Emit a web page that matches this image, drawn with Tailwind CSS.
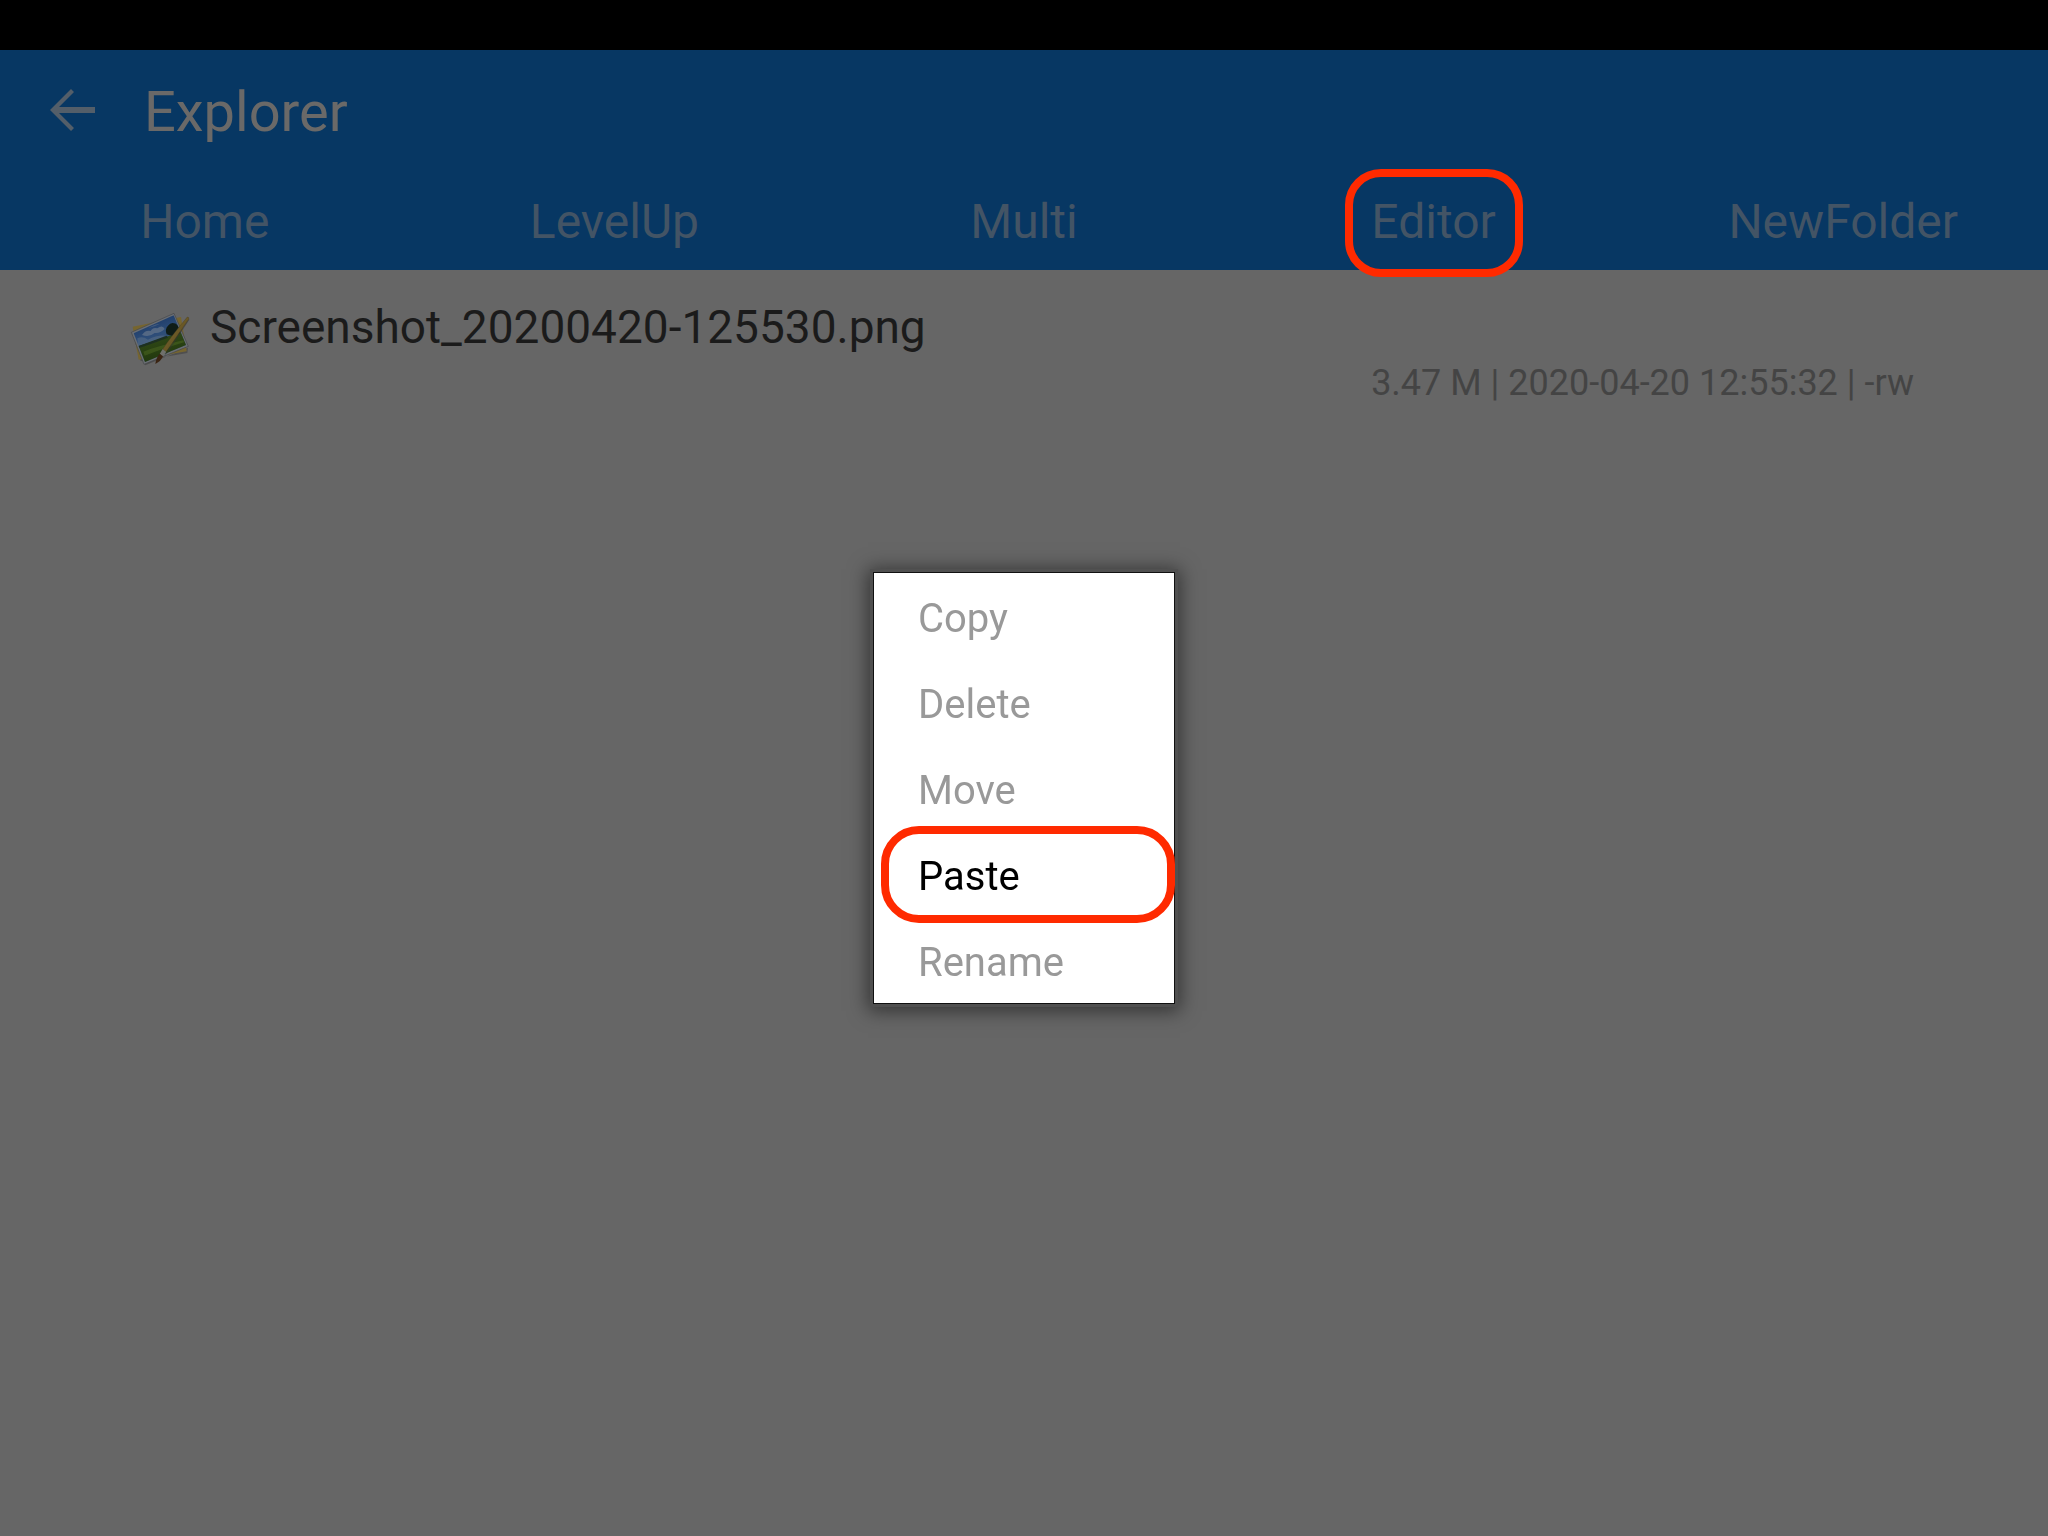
<!DOCTYPE html>
<html lang="en">
<head>
    <meta charset="UTF-8">
    <meta name="viewport" content="width=device-width, initial-scale=1.0">
    <title>Explorer</title>
    <script src="https://cdn.jsdelivr.net/npm/@tailwindcss/browser@4"></script>
</head>
<body class="min-h-screen bg-[#666666] font-['Roboto',sans-serif]">

<!-- Status bar -->
<div class="h-[50px] bg-black"></div>

<!-- App bar -->
<header class="bg-[#073763]">
    <div class="flex h-[120px] items-center gap-12 pl-[50px]">
        <button type="button" aria-label="Back" class="text-[#535e69]">
            <svg class="h-[42px] w-[46px]" viewBox="0 0 138 126" fill="currentColor">
                <path d="M63 0L72 9L27 54H135V72H27L72 117L63 126L0 63Z"/>
            </svg>
        </button>
        <h1 class="pt-1 text-[56px] leading-none text-[#6a6968]">Explorer</h1>
    </div>

    <!-- Tabs -->
    <nav class="grid h-[100px] grid-cols-5 pt-1 text-5xl text-[#435465]">
        <button type="button">Home</button>
        <button type="button">LevelUp</button>
        <button type="button">Multi</button>
        <button type="button" class="relative">
            Editor
            <span class="absolute -top-[5px] -bottom-[7px] left-1/2 w-[178px] -translate-x-1/2 rounded-[36px] border-8 border-[#ff2a00]"></span>
        </button>
        <button type="button">NewFolder</button>
    </nav>
</header>

<!-- File list -->
<main>
    <ul>
        <li class="flex gap-5 pt-[27px] pl-[130px]">
            <svg class="mt-[14px] h-[55px] w-[60px] shrink-0" viewBox="30 50 180 165" aria-hidden="true">
                <defs>
                    <linearGradient id="sky" x1="0" y1="0" x2="0.4" y2="1">
                        <stop offset="0" stop-color="#102a58"/>
                        <stop offset="0.5" stop-color="#2c4c78"/>
                        <stop offset="1" stop-color="#4a6074"/>
                    </linearGradient>
                    <linearGradient id="grass" x1="0" y1="0" x2="0.3" y2="1">
                        <stop offset="0" stop-color="#36501a"/>
                        <stop offset="1" stop-color="#1f350c"/>
                    </linearGradient>
                    <linearGradient id="brush" x1="0" y1="0" x2="1" y2="1">
                        <stop offset="0" stop-color="#7d6a33"/>
                        <stop offset="1" stop-color="#574619"/>
                    </linearGradient>
                    <clipPath id="photo"><path d="M41 117L161 63L198 152L75 203Z"/></clipPath>
                </defs>
                <path d="M38 118L76 213L204 160L202 176L62 200Z" fill="#3f3f3f" opacity="0.6"/>
                <path d="M38 97L183 68L200 171L56 196Z" fill="#76652f"/>
                <path d="M34 114L162 57L205 156L72 210Z" fill="#6a6e73" stroke="#444648" stroke-width="2"/>
                <g clip-path="url(#photo)">
                    <path d="M30 50H210V215H30Z" fill="url(#sky)"/>
                    <path d="M66 122Q76 106 92 110Q98 98 112 102Q128 90 134 104Q120 118 104 116Q88 130 66 122Z" fill="#5f7088" opacity="0.8"/>
                    <path d="M52 132Q68 124 84 136Q110 122 136 124L100 142L54 154Z" fill="#566c86" opacity="0.6"/>
                    <path d="M84 102Q100 90 120 88Q106 96 84 102Z" fill="#566a86" opacity="0.6"/>
                    <path d="M50 157Q90 144 130 130L200 108V215H60Z" fill="url(#grass)"/>
                    <path d="M50 157Q90 142 140 124L144 130Q90 150 54 162Z" fill="#1d3021"/>
                    <path d="M140 120Q134 104 144 94Q152 84 162 87Q172 86 182 112L176 120Q158 128 140 120Z" fill="#0f1c17"/>
                    <path d="M70 172Q110 156 190 138L192 144Q120 166 74 184Z" fill="#48621f" opacity="0.6"/>
                </g>
                <path d="M201 76L208 76L144 174L132 186Z" fill="#333" opacity="0.5"/>
                <path d="M202 68Q208 68 206 75L138 173L128 165Q150 130 202 68Z" fill="url(#brush)" stroke="#41361a" stroke-width="1"/>
                <path d="M128 164L139 173L128 186L119 179Z" fill="#70706c"/>
                <path d="M119 178L129 186Q124 200 106 209Q108 190 119 178Z" fill="#3b2412"/>
            </svg>
            <div class="flex-1 pr-[134px]">
                <p class="text-[46px] leading-[60px] text-[#1b1b1b]">Screenshot_20200420-125530.png</p>
                <p class="pt-1 text-right text-4xl leading-[44px] text-[#444444]">3.47 M | 2020-04-20 12:55:32 | -rw</p>
            </div>
        </li>
    </ul>
</main>

<!-- Editor menu -->
<div class="fixed inset-0 flex items-center justify-center pt-10">
    <div role="menu" class="w-[300px] bg-white text-[40px] text-[#999999] shadow-[0_0_0_1px_#111,0_0_0_4px_#505050,0_2px_18px_6px_rgba(0,0,0,0.5)]">
        <button type="button" role="menuitem" disabled class="block h-[86px] w-full pt-[6px] pl-11 text-left">Copy</button>
        <button type="button" role="menuitem" disabled class="block h-[86px] w-full pt-[6px] pl-11 text-left">Delete</button>
        <button type="button" role="menuitem" disabled class="block h-[86px] w-full pt-[6px] pl-11 text-left">Move</button>
        <button type="button" role="menuitem" class="relative block h-[86px] w-full pt-[6px] pl-11 text-left text-black">
            Paste
            <span class="absolute -top-[5px] -right-px -bottom-[6px] left-[7px] rounded-[38px] border-8 border-[#ff2a00]"></span>
        </button>
        <button type="button" role="menuitem" disabled class="block h-[86px] w-full pt-[6px] pl-11 text-left">Rename</button>
    </div>
</div>

</body>
</html>
